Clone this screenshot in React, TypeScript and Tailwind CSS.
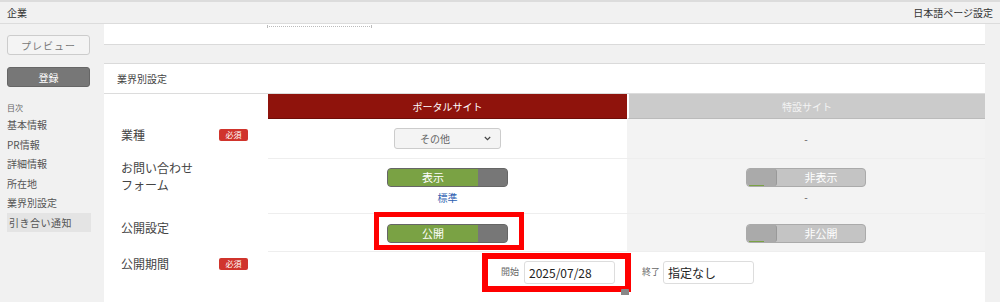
import React from "react";

const font = { fontFamily: '"Noto Sans CJK JP", "Noto Sans", sans-serif' };

function Badge() {
  return (
    <span className="inline-flex h-[12px] w-[29px] items-center justify-center rounded-[2px] bg-[#d0342c] text-[8px] leading-none text-white">
      必須
    </span>
  );
}

function ToggleOn({ label }: { label: string }) {
  return (
    <div className="flex h-[19px] w-[121px] overflow-hidden rounded-[4px] border border-[#666] bg-[#777]">
      <div className="flex w-[90px] items-center justify-center bg-[#7aa244] text-[11px] leading-none text-white">{label}</div>
      <div className="flex-1 bg-[#777]" />
    </div>
  );
}

function ToggleOff({ label }: { label: string }) {
  return (
    <div className="relative flex h-[19px] w-[120px] overflow-hidden rounded-[4px] border border-[#aaa] bg-[#c4c4c4]">
      <div className="w-[30px] rounded-[3px] border-r border-[#999] bg-[#aaa]" />
      <div className="flex flex-1 items-center justify-center text-[11px] leading-none text-white">{label}</div>
      <div className="absolute bottom-0 left-[2px] h-[1px] w-[15px] bg-[#7aa244]" />
    </div>
  );
}

export default function App() {
  return (
    <div className="h-[302px] w-[1000px] overflow-hidden bg-[#f1f1f1] text-[#333]" style={font}>
      {/* top bar */}
      <div className="flex h-[24px] items-center justify-between border-t-2 border-b border-t-[#dcdcdc] border-b-[#dcdcdc] bg-[#f1f1f1] px-[7px] text-[10px]">
        <span>企業</span>
        <span>日本語ページ設定</span>
      </div>
      <div className="flex">
        {/* sidebar */}
        <div className="w-[104px] shrink-0 px-[7px] pt-[11px]">
          <div className="flex h-[20px] w-[83px] items-center justify-center rounded-[3px] border border-[#ccc] bg-[#f4f4f4] text-[10px] tracking-[1px] text-[#777]">
            プレビュー
          </div>
          <div className="mt-[12px] flex h-[20px] w-[83px] items-center justify-center rounded-[3px] border border-[#666] bg-[#777] text-[10px] text-white">
            登録
          </div>
          <div className="mt-[17px] text-[8px] leading-none text-[#666]">目次</div>
          <div className="mt-[3px] flex flex-col text-[10px] text-[#555]">
            <div className="flex h-[19.5px] items-center">基本情報</div>
            <div className="flex h-[19.5px] items-center">PR情報</div>
            <div className="flex h-[19.5px] items-center">詳細情報</div>
            <div className="flex h-[19.5px] items-center">所在地</div>
            <div className="flex h-[19.5px] items-center">業界別設定</div>
            <div className="flex h-[19.5px] w-[84px] items-center bg-[#e4e4e4] pl-[2px] tracking-[0.5px]">引き合い通知</div>
          </div>
        </div>
        {/* main */}
        <div className="w-[881px] shrink-0">
          <div className="relative h-[21px] border-b border-[#dadada] bg-white">
            <div className="absolute left-[163px] top-[1px] h-[2px] w-[105px] border-x border-b border-dotted border-[#bbb]" />
          </div>
          <div className="h-[19px] border-b border-[#dadada] bg-[#f1f1f1]" />
          <div className="bg-white">
            <div className="flex h-[30px] items-center border-b border-[#dcdcdc] pl-[13px] text-[10px] text-[#444]">業界別設定</div>
            <div className="flex">
              {/* labels column */}
              <div className="w-[164px] shrink-0 pl-[17px] pr-[20px] text-[12px] text-[#444]">
                <div className="h-[24px]" />
                <div className="flex h-[40px] items-center justify-between pb-[6px]">
                  <span>業種</span>
                  <Badge />
                </div>
                <div className="h-[55px] pt-[1px] leading-[17px]">
                  <div>お問い合わせ</div>
                  <div>フォーム</div>
                </div>
                <div className="flex h-[38px] items-center pb-[8px]">公開設定</div>
                <div className="flex h-[40px] items-center justify-between pb-[14px]">
                  <span>公開期間</span>
                  <Badge />
                </div>
              </div>
              {/* columns */}
              <div className="flex-1">
                <div className="flex h-[25px] text-[10px]">
                  <div className="flex w-[359px] items-center justify-center border-b border-[#6f0d08] bg-[#8f130c] text-white">ポータルサイト</div>
                  <div className="flex w-[358px] items-center justify-center border-b border-[#bbb] border-l-2 border-l-white bg-[#cbcbcb] text-[#f4f4f4]">特設サイト</div>
                </div>
                {/* row 1 */}
                <div className="flex h-[40px] border-b border-[#eee]">
                  <div className="flex w-[359px] items-center justify-center">
                    <div className="relative flex h-[21px] w-[107px] items-center rounded-[3px] border border-[#ccc] bg-[#f4f4f4] text-[10px] text-[#666]">
                      <span className="ml-[25px]">その他</span>
                      <svg className="absolute right-[9px] top-[7px]" width="7" height="5" viewBox="0 0 7 5">
                        <path d="M0.8 1 L3.5 3.6 L6.2 1" fill="none" stroke="#444" strokeWidth="1.2" />
                      </svg>
                    </div>
                  </div>
                  <div className="flex w-[358px] items-center justify-center bg-[#f3f3f3] text-[10px] text-[#555]">-</div>
                </div>
                {/* row 2 */}
                <div className="flex h-[55px] border-b border-[#eee]">
                  <div className="flex w-[359px] flex-col items-center pt-[9px]">
                    <div><ToggleOn label="表示" /></div>
                    <a className="mt-[3px] text-[10px] text-[#2a5db0]">標準</a>
                  </div>
                  <div className="flex w-[358px] flex-col items-center bg-[#f3f3f3] pt-[9px]">
                    <ToggleOff label="非表示" />
                    <span className="mt-[2px] text-[10px] text-[#555]">-</span>
                  </div>
                </div>
                {/* row 3 */}
                <div className="flex h-[38px] border-b border-[#eee]">
                  <div className="relative flex w-[359px] items-start justify-center pt-[10px]">
                    <div><ToggleOn label="公開" /></div>
                    <div className="absolute left-[106px] top-[-2px] h-[38px] w-[150px] border-[5px] border-[#ff0000]" />
                  </div>
                  <div className="flex w-[358px] items-start justify-center bg-[#f3f3f3] pt-[10px]">
                    <ToggleOff label="非公開" />
                  </div>
                </div>
                {/* row 4 */}
                <div className="relative flex h-[50px]">
                  <div className="flex w-[359px] items-start justify-end pt-[9px] pr-[12px]">
                    <span className="mr-[5px] mt-[4px] text-[9px] text-[#666]">開始</span>
                    <div className="flex h-[23px] w-[91px] items-center rounded-[3px] border border-[#ddd] bg-white pl-[4px] text-[12px] text-[#222]">2025/07/28</div>
                  </div>
                  <div className="flex w-[358px] items-start pl-[15px] pt-[9px]">
                    <span className="mr-[3px] mt-[4px] text-[9px] text-[#666]">終了</span>
                    <div className="flex h-[23px] w-[91px] items-center rounded-[3px] border border-[#ddd] bg-white pl-[4px] text-[12px] text-[#222]">指定なし</div>
                  </div>
                  <div className="absolute left-[214px] top-[1px] h-[39px] w-[149px] border-[6px] border-[#ff0000]" />
                  <div className="absolute left-[353px] top-[37px] h-[6px] w-[8px] rounded-t-[1px] bg-[#888]" />
                </div>
              </div>
            </div>
          </div>
        </div>
        <div className="flex-1 bg-[#f1f1f1]" />
      </div>
    </div>
  );
}
